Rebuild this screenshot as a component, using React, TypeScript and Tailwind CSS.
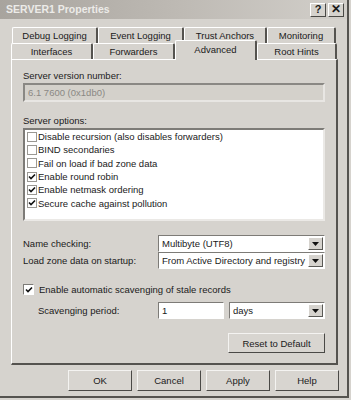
import React from 'react';

const font = { fontFamily: '"Liberation Sans", Arial, sans-serif' };

const Check: React.FC<{ on?: boolean; flat?: boolean }> = ({ on, flat }) => (
  <span
    className={
      flat
        ? 'w-[10px] h-[10px] border border-[#9a9893] bg-white flex items-center justify-center shrink-0'
        : 'w-[11px] h-[11px] border border-[#7d7b77] border-r-white border-b-white bg-white flex items-center justify-center shrink-0'
    }
  >
    {on && (
      <svg width="8" height="8" viewBox="0 0 8 8">
        <path d="M1 3.5 L3 5.5 L7 1.5" stroke="#111" strokeWidth="1.6" fill="none" />
      </svg>
    )}
  </span>
);

const Arrow: React.FC = () => (
  <span className="w-[15px] h-[13px] bg-[#d6d3ce] border border-white border-r-[#5a5955] border-b-[#5a5955] flex items-center justify-center">
    <svg width="7" height="4" viewBox="0 0 7 4">
      <path d="M0 0 H7 L3.5 4 Z" fill="#111" />
    </svg>
  </span>
);

const Select: React.FC<{ value: string; w: string }> = ({ value, w }) => (
  <div
    className={`${w} h-[17px] bg-white border border-[#7d7b77] border-r-white border-b-white flex items-center justify-between pl-[3px] pr-[1px]`}
  >
    <span className="whitespace-nowrap">{value}</span>
    <Arrow />
  </div>
);

const Button: React.FC<{ label: string; w: string; h?: string }> = ({ label, w, h = 'h-[21px]' }) => (
  <div
    className={`${w} ${h} bg-[#d8d5d0] border border-[#f4f3f1] border-r-[#4a4946] border-b-[#4a4946] flex items-center justify-center`}
  >
    {label}
  </div>
);

const Tab: React.FC<{ label: string; w: string }> = ({ label, w }) => (
  <div
    className={`${w} h-[16px] border-l border-t border-white border-r-2 border-r-[#55534f] rounded-t-[2px] flex items-center justify-center`}
  >
    {label}
  </div>
);

export default function App() {
  const options: [string, boolean][] = [
    ['Disable recursion (also disables forwarders)', false],
    ['BIND secondaries', false],
    ['Fail on load if bad zone data', false],
    ['Enable round robin', true],
    ['Enable netmask ordering', true],
    ['Secure cache against pollution', true],
  ];

  return (
    <div
      style={font}
      className="w-[351px] h-[400px] bg-[#d6d3ce] text-[9.5px] leading-[13px] text-[#1a1a1a] overflow-hidden"
    >
      <div className="w-[349px] h-[398px] border-r-2 border-b-2 border-[#55534f] flex flex-col">
        {/* Title bar */}
        <div className="h-[19px] bg-gradient-to-r from-[#a8a49e] via-[#bdb9b3] to-[#d2cfca] flex items-center justify-between pl-[6px] pr-[3px]">
          <span className="font-bold text-[10.5px] text-[#ecebe8]">SERVER1 Properties</span>
          <div className="flex gap-[2px]">
            <span className="w-[16px] h-[14px] bg-[#d6d3ce] border border-white border-r-[#4a4946] border-b-[#4a4946] flex items-center justify-center font-bold text-[11px]">?</span>
            <span className="w-[16px] h-[14px] bg-[#d6d3ce] border border-white border-r-[#4a4946] border-b-[#4a4946] flex items-center justify-center font-bold text-[12px]">✕</span>
          </div>
        </div>

        {/* Tabs */}
        <div className="mt-[8px] ml-[12px] flex">
          <Tab label="Debug Logging" w="w-[86px]" />
          <Tab label="Event Logging" w="w-[86px]" />
          <Tab label="Trust Anchors" w="w-[83px]" />
          <Tab label="Monitoring" w="w-[69px]" />
        </div>
        <div className="ml-[11px] flex items-end h-[16px] relative z-10">
          <Tab label="Interfaces" w="w-[82px]" />
          <Tab label="Forwarders" w="w-[82px]" />
          <div className="w-[82px] h-[20px] -mb-[1px] bg-[#d6d3ce] border-l border-t border-white border-r-2 border-r-[#55534f] rounded-t-[2px] flex justify-center pt-[2px]">
            Advanced
          </div>
          <Tab label="Root Hints" w="w-[80px]" />
        </div>

        {/* Panel */}
        <div className="ml-[11px] w-[327px] h-[306px] border-l border-t border-white border-r-2 border-b-2 border-r-[#55534f] border-b-[#55534f] pl-[11px] pr-[11px] pt-[9px]">
          <div className="text-[#222]">Server version number:</div>
          <div className="mt-[1px] w-[302px] h-[19px] bg-[#d4d1cb] border-2 border-[#8a8884] border-r-[#e8e6e3] border-b-[#e8e6e3] flex items-center pl-[3px] text-[#8a8884]">
            6.1 7600 (0x1db0)
          </div>

          <div className="mt-[12px]">Server options:</div>
          <div className="mt-[1px] w-[302px] h-[93px] bg-white border-2 border-[#7d7b77] border-r-[#ebe9e6] border-b-[#ebe9e6] pl-[2px]">
            {options.map(([label, on]) => (
              <div key={label} className="h-[13.3px] flex items-center gap-[1px]">
                <Check on={on} flat />
                <span>{label}</span>
              </div>
            ))}
          </div>

          <div className="mt-[14px] flex items-center">
            <span className="w-[135px]">Name checking:</span>
            <Select value="Multibyte (UTF8)" w="w-[167px]" />
          </div>
          <div className="mt-[0px] flex items-center">
            <span className="w-[135px]">Load zone data on startup:</span>
            <Select value="From Active Directory and registry" w="w-[167px]" />
          </div>

          <div className="mt-[14px] flex items-center gap-[5px]">
            <Check on />
            <span>Enable automatic scavenging of stale records</span>
          </div>
          <div className="mt-[6px] flex items-center">
            <span className="w-[135px] pl-[15px]">Scavenging period:</span>
            <div className="w-[66px] h-[17px] bg-white border border-[#7d7b77] border-r-white border-b-white flex items-center pl-[3px]">1</div>
            <div className="ml-[5px]">
              <Select value="days" w="w-[96px]" />
            </div>
          </div>

          <div className="mt-[14px] flex justify-end">
            <Button label="Reset to Default" w="w-[97px]" h="h-[20px]" />
          </div>
        </div>

        {/* Bottom buttons */}
        <div className="mt-[5px] ml-[68px] flex gap-[5px]">
          <Button label="OK" w="w-[64px]" />
          <Button label="Cancel" w="w-[64px]" />
          <Button label="Apply" w="w-[64px]" />
          <Button label="Help" w="w-[64px]" />
        </div>
      </div>
    </div>
  );
}
